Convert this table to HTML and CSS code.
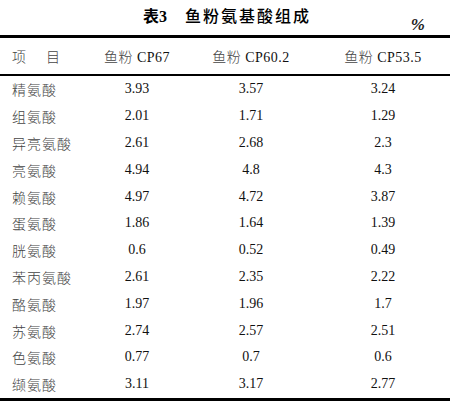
FILE: index.html
```html
<!DOCTYPE html>
<html lang="zh-CN">
<head>
<meta charset="UTF-8">
<meta name="viewport" content="width=device-width, initial-scale=1.0">
<title>鱼粉氨基酸组成</title>
<link rel="stylesheet" href="styles.css">
</head>
<body>

<div class="tabela">
    <div class="cabecalho">
        <span></span>
        <h2 class="titulo"><b>表3</b><span class="nome">鱼粉氨基酸组成</span></h2>
        <span class="unidade">%</span>
    </div>

    <table class="dados">
        <colgroup>
            <col class="c1">
            <col class="c2">
            <col class="c3">
            <col class="c4">
        </colgroup>
        <thead>
            <tr>
                <th class="rotulo">项<span class="vao"></span>目</th>
                <th><span class="cn">鱼粉</span> CP67</th>
                <th><span class="cn">鱼粉</span> CP60.2</th>
                <th class="ultima"><span class="cn">鱼粉</span> CP53.5</th>
            </tr>
        </thead>
        <tbody>
            <tr><td class="rotulo">精氨酸</td><td>3.93</td><td>3.57</td><td class="ultima">3.24</td></tr>
            <tr><td class="rotulo">组氨酸</td><td>2.01</td><td>1.71</td><td class="ultima">1.29</td></tr>
            <tr><td class="rotulo">异亮氨酸</td><td>2.61</td><td>2.68</td><td class="ultima">2.3</td></tr>
            <tr><td class="rotulo">亮氨酸</td><td>4.94</td><td>4.8</td><td class="ultima">4.3</td></tr>
            <tr><td class="rotulo">赖氨酸</td><td>4.97</td><td>4.72</td><td class="ultima">3.87</td></tr>
            <tr><td class="rotulo">蛋氨酸</td><td>1.86</td><td>1.64</td><td class="ultima">1.39</td></tr>
            <tr><td class="rotulo">胱氨酸</td><td>0.6</td><td>0.52</td><td class="ultima">0.49</td></tr>
            <tr><td class="rotulo">苯丙氨酸</td><td>2.61</td><td>2.35</td><td class="ultima">2.22</td></tr>
            <tr><td class="rotulo">酪氨酸</td><td>1.97</td><td>1.96</td><td class="ultima">1.7</td></tr>
            <tr><td class="rotulo">苏氨酸</td><td>2.74</td><td>2.57</td><td class="ultima">2.51</td></tr>
            <tr><td class="rotulo">色氨酸</td><td>0.77</td><td>0.7</td><td class="ultima">0.6</td></tr>
            <tr><td class="rotulo">缬氨酸</td><td>3.11</td><td>3.17</td><td class="ultima">2.77</td></tr>
        </tbody>
    </table>
</div>

</body>
</html>
```

FILE: styles.css
```css
body {
    margin: 0;
    padding: 0;
    background-color: #fff;
    color: #111;
    font-family: "Liberation Serif", "Noto Sans CJK SC", serif;
}

.tabela {
    width: 450px;
}

/* Titulo e unidade */
.cabecalho {
    display: grid;
    grid-template-columns: 1fr auto 1fr;
    height: 35px;
}

.titulo {
    margin: 0;
    padding-top: 7px;
    font-size: 16px;
    line-height: 20px;
    font-weight: 500;
    letter-spacing: 2px;
    color: #000;
    margin-left: 4px;
}

.titulo b {
    font-weight: 700;
    letter-spacing: 0;
}

.nome {
    margin-left: 18px;
}

.unidade {
    justify-self: end;
    align-self: end;
    padding-right: 25px;
    padding-bottom: 2px;
    font-size: 17px;
    font-style: italic;
    font-weight: 700;
    line-height: 17px;
    color: #222;
}

/* Tabela */
.dados {
    width: 450px;
    border-collapse: collapse;
    table-layout: fixed;
    border-top: 3px solid #000;
    border-bottom: 3px solid #000;
    font-size: 14px;
}

.c1 { width: 80px; }
.c2 { width: 114px; }
.c3 { width: 114px; }
.c4 { width: 142px; }

th, td {
    padding: 0;
    text-align: center;
    white-space: nowrap;
}

th {
    height: 36px;
    font-weight: normal;
    border-bottom: 2px solid #000;
    letter-spacing: 0.5px;
}

td {
    height: 26.8px;
}

.rotulo, .cn {
    font-weight: 300;
    color: #444;
}

.rotulo {
    text-align: left;
    padding-left: 12px;
    letter-spacing: 1px;
}

.vao {
    display: inline-block;
    width: 19px;
}

.ultima {
    padding-left: 8px;
}
```
